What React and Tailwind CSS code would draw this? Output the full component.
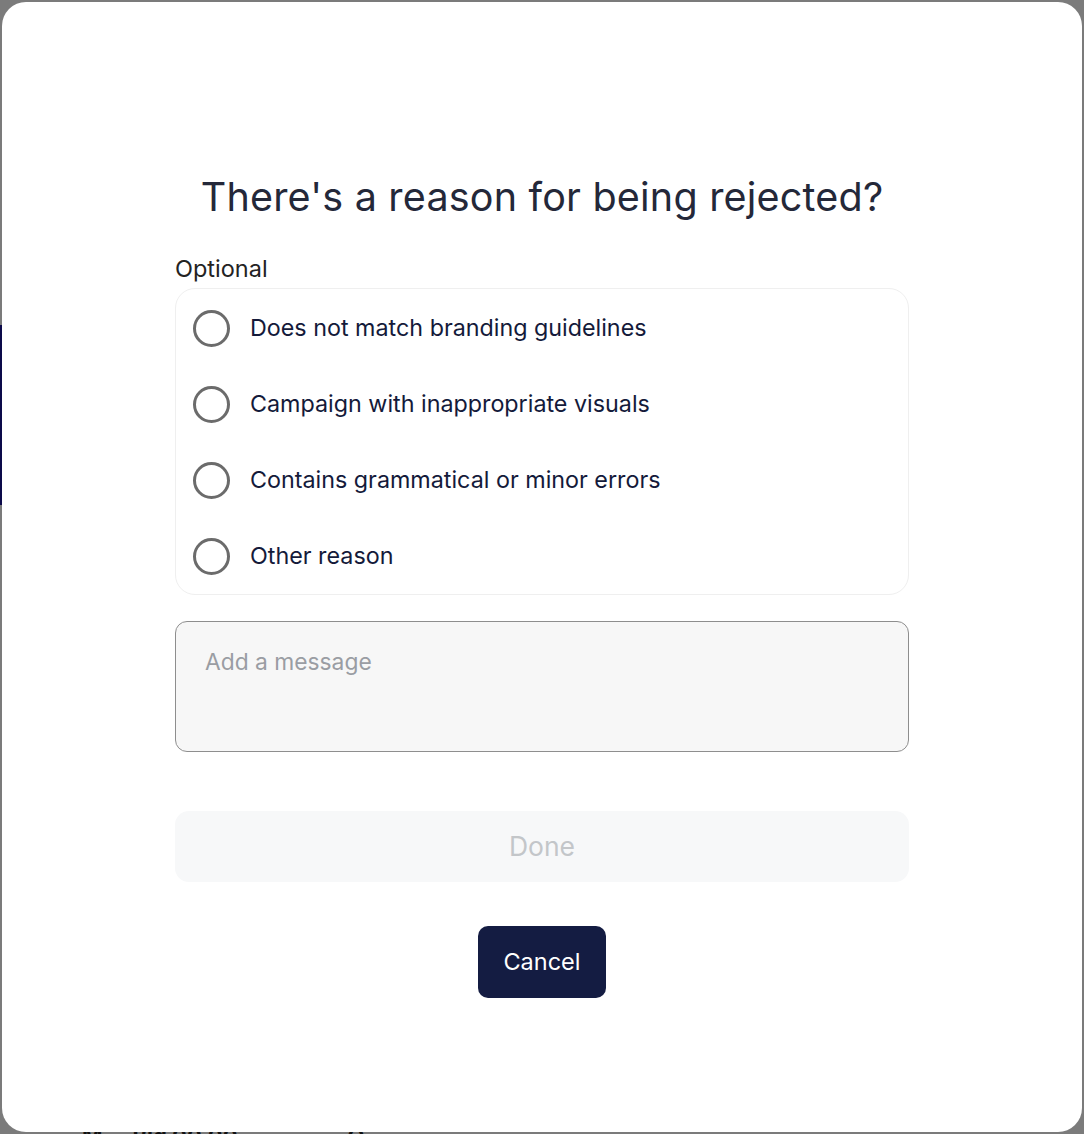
import { useState } from 'react';

const reasons = [
  'Does not match branding guidelines',
  'Campaign with inappropriate visuals',
  'Contains grammatical or minor errors',
  'Other reason',
];

export default function App() {
  const [selected, setSelected] = useState(null);
  const [message, setMessage] = useState('');

  return (
    <div
      className="relative w-[1084px] h-[1134px] bg-[#7b7b7b] p-[2px] overflow-hidden"
      style={{ fontFamily: 'Inter, "Noto Sans", sans-serif' }}
    >
      {/* bits of the page behind the overlay */}
      <div className="absolute left-0 top-[325px] w-[3px] h-[180px] bg-[#0c0a4a]" />
      <div className="absolute left-[82px] top-[1120px] flex gap-[30px] text-[22px] font-bold text-[#111]">
        <span>M</span>
        <span>Bid 00.00</span>
        <span className="ml-[80px]">Q</span>
      </div>

      <div className="relative h-full w-full rounded-[24px] bg-white flex flex-col items-center pt-[170px]">
        <h2 className="text-[39.5px] leading-[50px] text-[#242839] tracking-[0.2px]">
          There's a reason for being rejected?
        </h2>

        <div className="w-[734px] mt-[32px]">
          <p className="text-[23.5px] leading-[30px] text-[#232323]">Optional</p>

          <div className="mt-[4px] rounded-[20px] border border-[#efefef] px-[17px] pt-[1px] flex flex-col">
            {reasons.map((r, i) => (
              <button
                key={r}
                type="button"
                onClick={() => setSelected(i)}
                className="flex items-center gap-[20px] h-[76px] text-left"
              >
                <span className="w-[37px] h-[37px] rounded-full border-[3px] border-[#6b6b6b] flex items-center justify-center shrink-0">
                  {selected === i && <span className="w-[19px] h-[19px] rounded-full bg-[#141c42]" />}
                </span>
                <span className="text-[23.3px] text-[#141a3a]">{r}</span>
              </button>
            ))}
          </div>

          <textarea
            value={message}
            onChange={(e) => setMessage(e.target.value)}
            placeholder="Add a message"
            className="mt-[26px] block w-full h-[131px] resize-none rounded-[12px] border border-[#8e8e8e] bg-[#f7f7f7] px-[29px] py-[24px] text-[22.8px] leading-[32px] text-[#141a3a] placeholder:text-[#9a9da3] outline-none"
          />

          <button
            type="button"
            disabled
            className="mt-[59px] w-full h-[71px] rounded-[14px] bg-[#f7f8f9] text-[26.5px] text-[#c3c6c9]"
          >
            Done
          </button>
        </div>

        <button
          type="button"
          className="mt-[44px] w-[128px] h-[72px] rounded-[10px] bg-[#141c42] text-white text-[23.5px]"
        >
          Cancel
        </button>
      </div>
    </div>
  );
}
